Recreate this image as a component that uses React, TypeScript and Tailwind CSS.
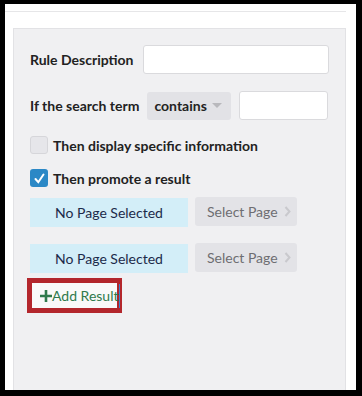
import React from 'react';

const Caret = () => (
  <svg width="10" height="6" viewBox="0 0 10 6" className="ml-auto shrink-0">
    <path d="M0 0 L10 0 L5 5 Z" fill="#b8b8bc" />
  </svg>
);

const PageRow = () => (
  <div className="flex items-start gap-[7px]">
    <div className="mt-[1px] w-[158px] h-[29px] bg-[#d3eef8] flex items-center justify-center text-[14px] text-[#1c2a4a]">
      No Page Selected
    </div>
    <button className="w-[102px] h-[29px] rounded-[3px] bg-[#e3e3e7] flex items-center pl-[12px] text-[14px] text-[#6e6e72] whitespace-nowrap">
      Select Page
      <svg width="7" height="11" viewBox="0 0 7 11" className="ml-[6px] shrink-0">
        <path d="M1.5 1 L5.5 5.5 L1.5 10" stroke="#c9c9cd" strokeWidth="2" fill="none" />
      </svg>
    </button>
  </div>
);

const App = () => {
  return (
    <div className="w-[362px] h-[396px] bg-black pt-[4px] pl-[5px] pr-[6px] pb-[6px] font-['Lato',sans-serif]">
      <div className="w-full h-full bg-white flex flex-col">
        <div className="mt-[7px] h-[1px] w-[341px] bg-[#e6e6e8]" />
        <div className="mt-[16px] ml-[8px] w-[333px] flex-1 bg-[#f0f0f2] border-t border-x border-[#e2e2e5] pl-[16px] pt-[16px]">
          <div className="flex items-center gap-[9px] h-[29px]">
            <span className="text-[14px] font-bold text-[#222]">Rule Description</span>
            <input className="w-[186px] h-[29px] bg-white border border-[#dadadd] rounded-[3px]" />
          </div>

          <div className="flex items-center gap-[8px] h-[29px] mt-[17px]">
            <span className="text-[14px] font-bold text-[#222]">If the search term</span>
            <div className="w-[84px] h-[28px] rounded-[3px] bg-[#e2e2e6] flex items-center pl-[7px] pr-[9px] text-[14px] font-bold text-[#222]">
              contains
              <Caret />
            </div>
            <input className="w-[89px] h-[29px] bg-white border border-[#dadadd] rounded-[3px]" />
          </div>

          <label className="flex items-center gap-[5px] mt-[16px] h-[18px]">
            <span className="w-[18px] h-[18px] rounded-[3px] bg-[#e6e6ea] border border-[#d6d6da]" />
            <span className="text-[14px] font-bold text-[#222]">Then display specific information</span>
          </label>

          <label className="flex items-center gap-[5px] mt-[15px] h-[18px]">
            <span className="w-[18px] h-[18px] rounded-[3px] bg-[#2b88c6] flex items-center justify-center">
              <svg width="11" height="11" viewBox="0 0 11 11">
                <path d="M1.5 6 L4.3 9.2 L9.5 1.5" stroke="white" strokeWidth="2" fill="none" strokeLinecap="round" />
              </svg>
            </span>
            <span className="text-[14px] font-bold text-[#222]">Then promote a result</span>
          </label>

          <div className="mt-[10px]">
            <PageRow />
          </div>
          <div className="mt-[16px]">
            <PageRow />
          </div>

          <div className="mt-[5px] -ml-[3px] w-[95px] h-[35px] border-[5px] border-[#b3262c] bg-[#f9f9f9] flex items-center pl-[8px] whitespace-nowrap">
            <svg width="12" height="12" viewBox="0 0 12 12" className="shrink-0">
              <path d="M6 0 V12 M0 6 H12" stroke="#2f7a4c" strokeWidth="2.6" />
            </svg>
            <span className="text-[14px] text-[#2f7a4c] leading-none">Add Result</span>
            <span className="w-[1px] h-[24px] bg-[#3a86d0] shrink-0" />
          </div>
        </div>
      </div>
    </div>
  );
};

export default App;
